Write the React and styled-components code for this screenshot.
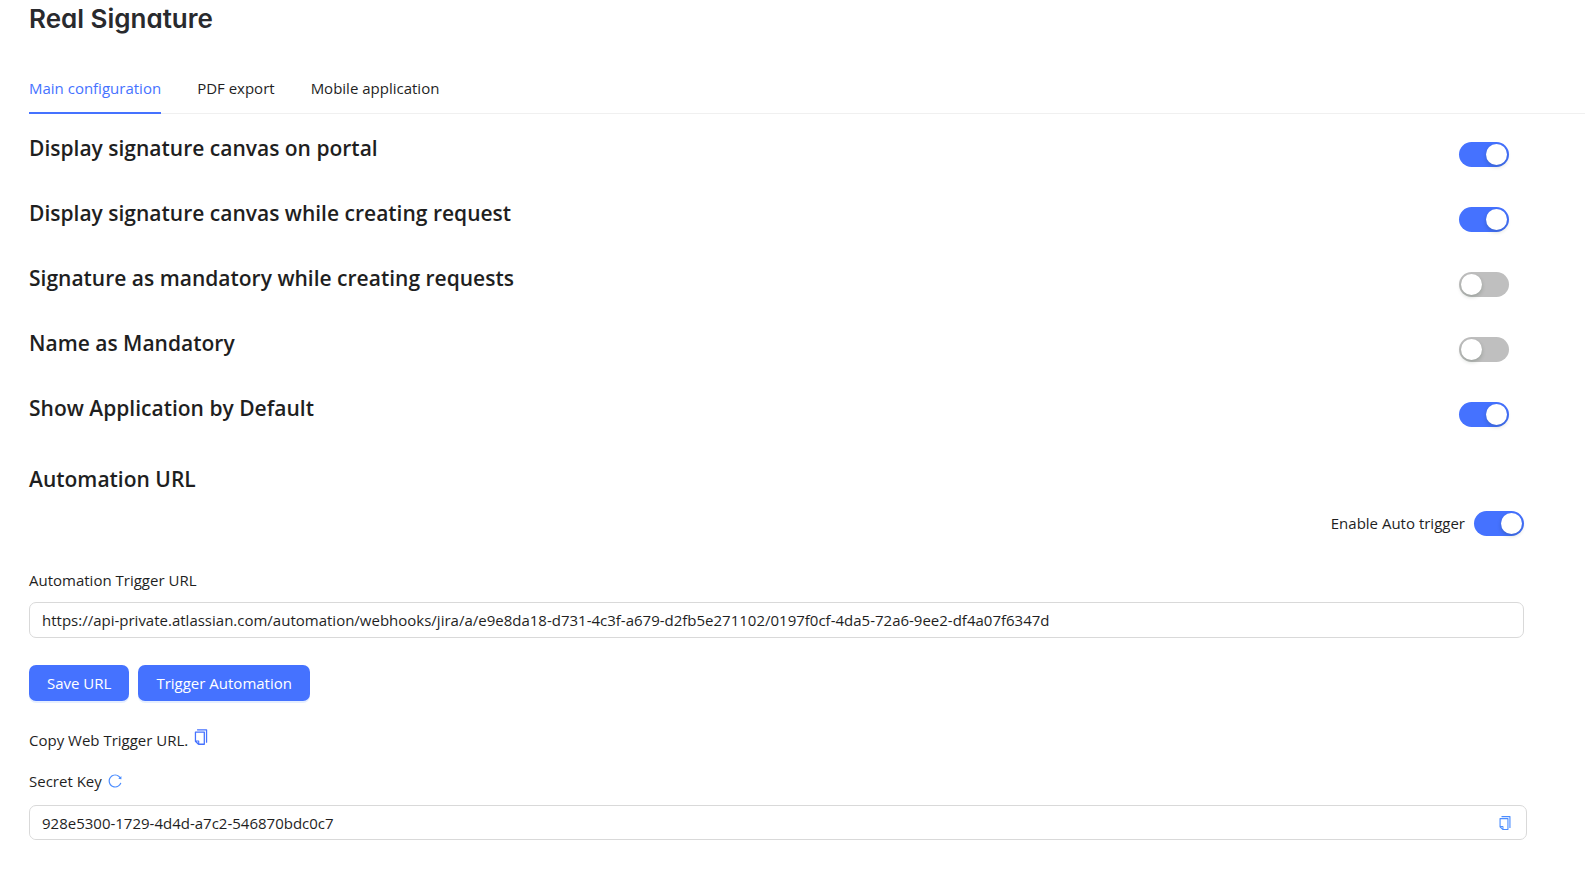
import React, { useState } from 'react'
import styled, { createGlobalStyle, ThemeProvider } from 'styled-components'
import { AiOutlineCopy, AiOutlineReload } from 'react-icons/ai'

const theme = {
  main: '#4572ff',
  link: '#4c8dff',
  text: '#1f1f1f',
  title: '#292a2e',
  border: '#d9d9d9',
  line: '#f0f0f0',
  off: '#bfbfbf',
}

const GlobalStyle = createGlobalStyle`
  * {
    box-sizing: border-box;
  }
  body {
    margin: 0;
    background-color: white;
  }
  body, button, input {
    font-family: "Segoe UI", "Open Sans", "Noto Sans", sans-serif;
    font-size: 15px;
    line-height: 24px;
    color: ${theme.text};
  }
`

const Container = styled.main`
  padding-left: 29px;
`

const Title = styled.h1`
  margin: 0;
  padding-top: 3px;
  font-family: Inter, sans-serif;
  font-feature-settings: "cv11";
  font-size: 26px;
  line-height: 32px;
  font-weight: 600;
  color: ${({ theme }) => theme.title};
`

const TabList = styled.div`
  display: flex;
  gap: 36px;
  margin-top: 28px;
  border-bottom: 1px solid ${({ theme }) => theme.line};
`

const Tab = styled.button`
  margin-bottom: -1px;
  padding: 13px 0 12px;
  border: none;
  border-bottom: 2px solid ${({ theme, $active }) => ($active ? theme.main : 'transparent')};
  background: none;
  color: ${({ theme, $active }) => ($active ? theme.main : theme.text)};
  cursor: pointer;
`

const Settings = styled.div`
  padding-right: 76px;
`

const SettingRow = styled.div`
  display: flex;
  align-items: flex-start;
  justify-content: space-between;
  height: 65px;
  padding-top: 19px;
`

const heading = `
  font-size: 21px;
  line-height: 30px;
  font-weight: 600;
`

const SettingLabel = styled.label`
  ${heading}
`

const SectionTitle = styled.h2`
  margin: 0;
  ${heading}
`

const Switch = styled.input.attrs({ type: 'checkbox', role: 'switch' })`
  appearance: none;
  display: flex;
  flex: none;
  justify-content: ${({ checked }) => (checked ? 'flex-end' : 'flex-start')};
  width: 50px;
  height: 25px;
  margin: ${({ $offset }) => ($offset ? '9px 0 0' : '0')};
  padding: 2px;
  border-radius: 13px;
  background-color: ${({ theme, checked }) => (checked ? theme.main : theme.off)};
  cursor: pointer;

  &::before {
    content: "";
    width: 21px;
    height: 21px;
    border-radius: 50%;
    background-color: white;
    box-shadow: 0 2px 4px rgba(0, 35, 11, 0.2);
  }
`

const Automation = styled.section`
  padding: 25px 61px 0 0;
`

const AutoTrigger = styled.label`
  display: flex;
  align-items: flex-start;
  justify-content: flex-end;
  gap: 9px;
  margin-top: 17px;
`

const FieldLabel = styled.label`
  display: block;
`

const UrlField = styled.div`
  margin-top: 32px;
`

const TextInput = styled.input`
  display: block;
  width: 100%;
  height: 36px;
  padding: 0 12px;
  border: 1px solid ${({ theme }) => theme.border};
  border-radius: 7px;
  background-color: white;
`

const UrlInput = styled(TextInput)`
  margin-top: 10px;
`

const Buttons = styled.div`
  display: flex;
  gap: 9px;
  margin-top: 27px;
`

const Button = styled.button`
  height: 36px;
  padding: 0 18px;
  border: none;
  border-radius: 7px;
  background-color: ${({ theme }) => theme.main};
  box-shadow: 0 2px 0 rgba(5, 95, 255, 0.1);
  color: white;
  cursor: pointer;
`

const IconButton = styled.button`
  display: flex;
  padding: 0;
  border: none;
  background: none;
  color: ${({ theme, $light }) => ($light ? theme.link : theme.main)};
  cursor: pointer;
`

const CopyLine = styled.div`
  display: flex;
  gap: 4px;
  margin-top: 27px;
`

const Secret = styled.section`
  padding-right: 58px;
`

const SecretHead = styled.div`
  display: flex;
  align-items: center;
  gap: 5px;
  margin-top: 17px;
`

const SecretField = styled.div`
  display: flex;
  align-items: center;
  height: 35px;
  margin-top: 12px;
  padding-right: 13px;
  border: 1px solid ${({ theme }) => theme.border};
  border-radius: 7px;

  ${TextInput} {
    flex: 1;
    height: 32px;
    border: none;
  }
`

const tabs = ['Main configuration', 'PDF export', 'Mobile application']

const settings = [
  { id: 'portal', label: 'Display signature canvas on portal', on: true },
  { id: 'creating', label: 'Display signature canvas while creating request', on: true },
  { id: 'mandatory', label: 'Signature as mandatory while creating requests', on: false },
  { id: 'name', label: 'Name as Mandatory', on: false },
  { id: 'default', label: 'Show Application by Default', on: true },
]

function Setting({ id, label, on }) {
  const [checked, setChecked] = useState(on)
  return (
    <SettingRow>
      <SettingLabel htmlFor={id}>{label}</SettingLabel>
      <Switch id={id} $offset checked={checked} onChange={() => setChecked(!checked)} />
    </SettingRow>
  )
}

export default function App() {
  const [tab, setTab] = useState(tabs[0])
  const [auto, setAuto] = useState(true)
  const [url, setUrl] = useState('https://api-private.atlassian.com/automation/webhooks/jira/a/e9e8da18-d731-4c3f-a679-d2fb5e271102/0197f0cf-4da5-72a6-9ee2-df4a07f6347d')

  return (
    <ThemeProvider theme={theme}>
      <GlobalStyle />
      <Container>
        <Title>Real Signature</Title>
        <TabList role="tablist">
          {tabs.map(name => (
            <Tab key={name} role="tab" aria-selected={tab === name} $active={tab === name} onClick={() => setTab(name)}>
              {name}
            </Tab>
          ))}
        </TabList>
        <Settings>
          {settings.map(item => <Setting key={item.id} {...item} />)}
        </Settings>
        <Automation>
          <SectionTitle>Automation URL</SectionTitle>
          <AutoTrigger>
            Enable Auto trigger
            <Switch checked={auto} onChange={() => setAuto(!auto)} />
          </AutoTrigger>
          <UrlField>
            <FieldLabel htmlFor="url">Automation Trigger URL</FieldLabel>
            <UrlInput id="url" value={url} onChange={e => setUrl(e.target.value)} />
          </UrlField>
          <Buttons>
            <Button>Save URL</Button>
            <Button>Trigger Automation</Button>
          </Buttons>
          <CopyLine>
            <span>Copy Web Trigger URL.</span>
            <IconButton aria-label="Copy web trigger URL"><AiOutlineCopy size={18} /></IconButton>
          </CopyLine>
        </Automation>
        <Secret>
          <SecretHead>
            <FieldLabel htmlFor="secret">Secret Key</FieldLabel>
            <IconButton $light aria-label="Regenerate secret key"><AiOutlineReload size={16} /></IconButton>
          </SecretHead>
          <SecretField>
            <TextInput id="secret" readOnly value="928e5300-1729-4d4d-a7c2-546870bdc0c7" />
            <IconButton $light aria-label="Copy secret key"><AiOutlineCopy size={16} /></IconButton>
          </SecretField>
        </Secret>
      </Container>
    </ThemeProvider>
  )
}
